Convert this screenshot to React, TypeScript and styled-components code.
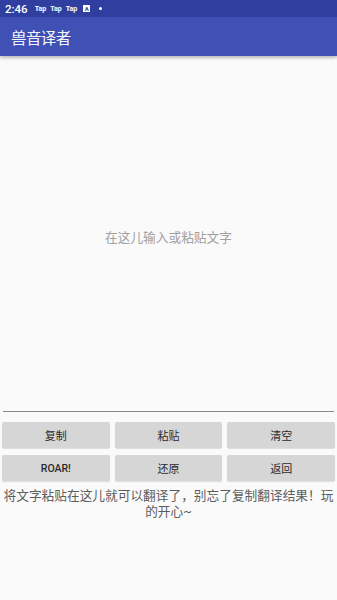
import { FC } from "react";
import styled, { createGlobalStyle } from "styled-components";

const Global = createGlobalStyle`
  html, body {
    margin: 0;
    padding: 0;
    background: #fafafa;
  }
  body {
    font-family: Roboto, "Noto Sans CJK SC", sans-serif;
  }
`;

const Page = styled.div`
  width: 337px;
  height: 600px;
  display: flex;
  flex-direction: column;
  background: #fafafa;
  overflow: hidden;
`;

const StatusBar = styled.div`
  height: 17px;
  background: #303f9f;
  display: flex;
  align-items: center;
  gap: 4px;
  padding-left: 5px;
  color: #fff;

  .time {
    font-size: 11.5px;
    font-weight: 500;
    margin-right: 3px;
  }
  .tap {
    font-size: 7px;
    font-weight: 700;
  }
`;

const Badge = styled.span`
  width: 7px;
  height: 7px;
  background: #fff;
  color: #303f9f;
  font-size: 6px;
  font-weight: 700;
  line-height: 7px;
  text-align: center;
  margin-left: 2px;
`;

const Dot = styled.span`
  width: 3px;
  height: 3px;
  border-radius: 50%;
  background: #fff;
  margin-left: 5px;
`;

const AppBar = styled.div`
  height: 39px;
  background: #3f51b5;
  display: flex;
  align-items: center;
  padding-left: 11px;
  color: #f4f4fb;
  font-size: 15.5px;
  letter-spacing: -0.6px;
  box-shadow: 0 2px 3px rgba(0, 0, 0, 0.25);
  position: relative;
  z-index: 1;
`;

const Input = styled.div`
  height: 356px;
  margin: 0 3px;
  border-bottom: 1px solid #8a8a8a;
  display: flex;
  align-items: center;
  justify-content: center;
  color: #a0a0a0;
  font-size: 12.7px;
  padding-top: 6px;
  box-sizing: border-box;
`;

const Grid = styled.div`
  display: grid;
  grid-template-columns: repeat(3, 1fr);
  gap: 7px 5px;
  padding: 10px 2px 0;
`;

const Btn = styled.div<{ $bold?: boolean }>`
  height: 26px;
  background: #d6d6d6;
  border-radius: 2px;
  box-shadow: 0 1px 1px rgba(0, 0, 0, 0.12);
  display: flex;
  align-items: center;
  justify-content: center;
  color: #2a2a2a;
  font-size: ${(p) => (p.$bold ? "10.5px" : "11px")};
  font-weight: ${(p) => (p.$bold ? 500 : 400)};
`;

const Note = styled.div`
  padding: 7px 2px 0;
  text-align: center;
  color: #5c5c5c;
  font-size: 12.7px;
  line-height: 16px;
`;

const labels = ["复制", "粘贴", "清空", "ROAR!", "还原", "返回"];

const App: FC = () => {
  return (
    <Page>
      <Global />
      <StatusBar>
        <span className="time">2:46</span>
        <span className="tap">Tap</span>
        <span className="tap">Tap</span>
        <span className="tap">Tap</span>
        <Badge>A</Badge>
        <Dot />
      </StatusBar>
      <AppBar>兽音译者</AppBar>
      <Input>在这儿输入或粘贴文字</Input>
      <Grid>
        {labels.map((l) => (
          <Btn key={l} $bold={l === "ROAR!"}>
            {l}
          </Btn>
        ))}
      </Grid>
      <Note>将文字粘贴在这儿就可以翻译了，别忘了复制翻译结果！玩的开心~</Note>
    </Page>
  );
};

export default App;
